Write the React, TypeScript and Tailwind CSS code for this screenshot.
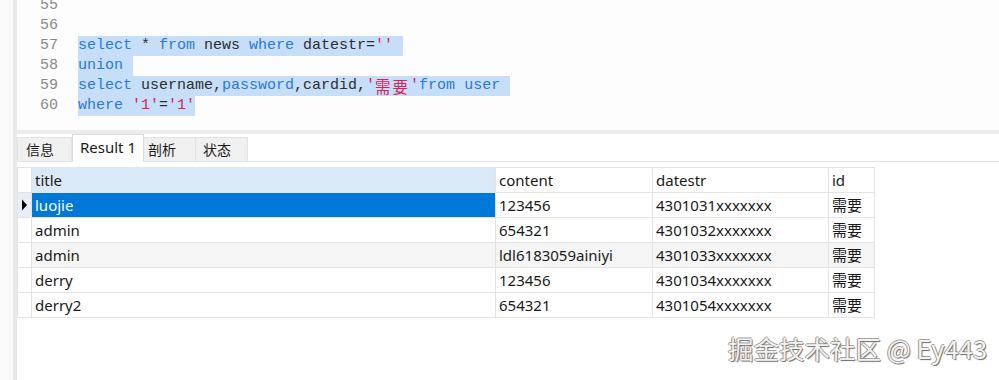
import React from "react";

const KW = "text-[#2b7bd4]";
const ID = "text-[#2e2e2e]";
const STR = "text-[#d8235a]";

type Tok = [string, string];

const lines: { n: number; toks: Tok[]; sel?: boolean; tail?: boolean }[] = [
    { n: 55, toks: [] },
    { n: 56, toks: [] },
    {
        n: 57, sel: true, tail: true, toks: [
            ["select", KW], [" * ", ID], ["from", KW], [" news ", ID], ["where", KW], [" datestr=", ID], ["''", STR],
        ]
    },
    { n: 58, sel: true, tail: true, toks: [["union", KW]] },
    {
        n: 59, sel: true, tail: true, toks: [
            ["select", KW], [" username,", ID], ["password", KW], [",cardid,", ID], ["'", STR], ["需要", STR + " cjk"], ["'", STR], ["from", KW], [" ", ID], ["user", KW],
        ]
    },
    { n: 60, sel: true, toks: [["where", KW], [" ", ID], ["'1'", STR], ["=", ID], ["'1'", STR]] },
];

const rows = [
    ["luojie", "123456", "4301031xxxxxxx", "需要"],
    ["admin", "654321", "4301032xxxxxxx", "需要"],
    ["admin", "ldl6183059ainiyi", "4301033xxxxxxx", "需要"],
    ["derry", "123456", "4301034xxxxxxx", "需要"],
    ["derry2", "654321", "4301054xxxxxxx", "需要"],
];

const uiFont = "font-['Noto_Sans','Noto_Sans_CJK_SC',sans-serif]";

export default function App() {
    return (
        <div className="relative w-[999px] h-[380px] flex bg-white overflow-hidden">
            {/* left strip */}
            <div className="w-[13px] bg-[#fafafa]" />
            <div className="w-[4px] bg-[#e9e9e9]" />

            <div className="flex-1 flex flex-col">
                {/* editor */}
                <div className="h-[130px] overflow-hidden bg-[#fdfdfd] font-['Liberation_Mono','Noto_Sans_CJK_SC',monospace] text-[15px]">
                    <div className="-mt-[4px]">
                        {lines.map((l) => (
                            <div key={l.n} className="flex h-[20px] leading-[20px] overflow-hidden">
                                <div className="w-[41px] text-right text-[#8a8a8a]">{l.n}</div>
                                <div className="w-[20px]" />
                                <div className={`flex h-[20px] whitespace-pre ${l.sel ? "bg-[#c6def7]" : ""}`}>
                                    {l.toks.map((t, i) => (
                                        <span key={i} className={t[1].includes("cjk") ? `${t[1].replace(" cjk", "")} block w-[35px] leading-[20px] tracking-[2px] font-['Noto_Sans_CJK_SC',sans-serif] text-[15.5px]` : `${t[1]} block`}>
                                            {t[0]}
                                        </span>
                                    ))}
                                    {l.tail ? <span className="block w-[10px]"> </span> : null}
                                </div>
                            </div>
                        ))}
                    </div>
                </div>

                {/* separator */}
                <div className="h-[4px] bg-[#ececec]" />

                {/* tabs */}
                <div className={`h-[28px] flex items-end border-b border-[#e3e3e3] ${uiFont} text-[14px] text-[#1a1a1a]`}>
                    <div className="h-[24px] w-[55px] flex items-center pl-[8px] bg-[#f0f0f0] border border-b-0 border-[#e3e3e3]">信息</div>
                    <div className="h-[28px] w-[72px] flex items-center justify-center bg-white border border-b-0 border-[#dcdcdc] -mb-px text-[15px] pb-[2px]">Result 1</div>
                    <div className="h-[24px] w-[52px] flex items-center pl-[4px] bg-[#f0f0f0] border border-b-0 border-l-0 border-[#e3e3e3]">剖析</div>
                    <div className="h-[24px] w-[52px] flex items-center pl-[7px] bg-[#f0f0f0] border border-b-0 border-l-0 border-[#e3e3e3]">状态</div>
                </div>

                {/* result grid */}
                <div className="mt-[5px]">
                    <table className={`border-collapse ${uiFont} text-[15px] text-[#1a1a1a]`}>
                        <thead>
                            <tr className="h-[25px]">
                                <th className="w-[13px] p-0 border border-[#e4e4e4] bg-white" />
                                <th className="w-[464px] p-0 pl-[3px] text-left font-normal bg-[#dae9f7] border border-[#e4e4e4]">title</th>
                                <th className="w-[157px] p-0 pl-[3px] text-left font-normal border border-[#e4e4e4]">content</th>
                                <th className="w-[176px] p-0 pl-[3px] text-left font-normal border border-[#e4e4e4]">datestr</th>
                                <th className="w-[46px] p-0 pl-[3px] text-left font-normal border border-[#e4e4e4]">id</th>
                            </tr>
                        </thead>
                        <tbody>
                            {rows.map((r, i) => (
                                <tr key={i} className={`h-[25px] ${i === 2 ? "bg-[#f5f5f5]" : "bg-white"}`}>
                                    <td className={`p-0 border border-[#e4e4e4] ${i === 0 ? "bg-[#e6eef7]" : "bg-white"}`}>
                                        {i === 0 ? (
                                            <svg width="13" height="24" viewBox="0 0 13 24" className="block">
                                                <path d="M4 6.5 L9 12 L4 17.5 Z" fill="#000" />
                                            </svg>
                                        ) : null}
                                    </td>
                                    <td className={`p-0 pl-[3px] border border-[#e4e4e4] ${i === 0 ? "bg-[#0078d7] text-white" : ""}`}>{r[0]}</td>
                                    <td className="p-0 pl-[3px] border border-[#e4e4e4]">{r[1]}</td>
                                    <td className="p-0 pl-[3px] border border-[#e4e4e4]">{r[2]}</td>
                                    <td className="p-0 pl-[3px] border border-[#e4e4e4]">{r[3]}</td>
                                </tr>
                            ))}
                        </tbody>
                    </table>
                </div>
            </div>

            {/* watermark */}
            <div className="absolute left-[728px] top-[331px] font-['Noto_Sans_CJK_SC',sans-serif] text-[25.5px] leading-[34px] text-[#f2f2f2] [text-shadow:1px_1px_1px_#6b6b6b,-1px_0_0_#9a9a9a,0_-1px_0_#a0a0a0]">
                掘金技术社区 @ Ey443
            </div>
        </div>
    );
}
